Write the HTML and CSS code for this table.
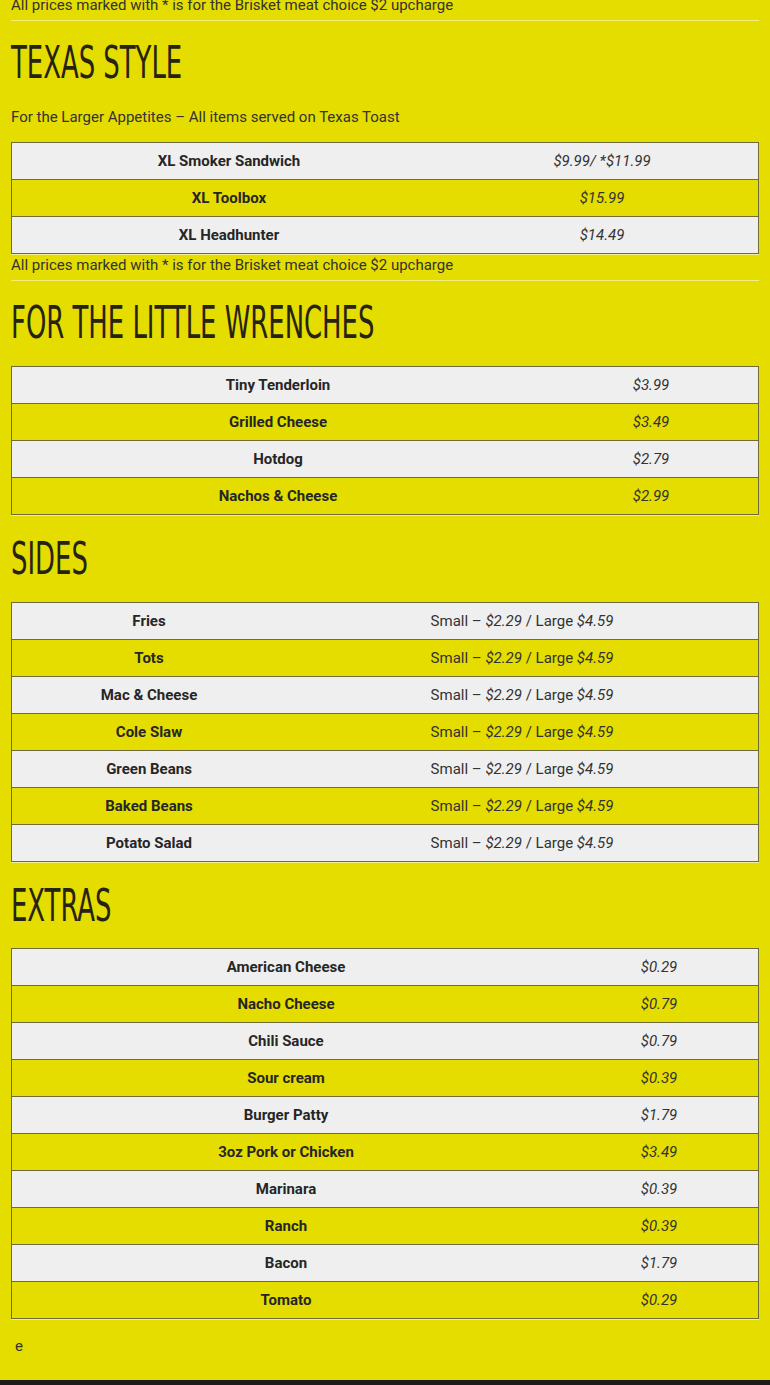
FILE: index.html
```html
<!DOCTYPE html>
<html lang="en">
<head>
<meta charset="utf-8">
<title>Menu</title>
<link rel="stylesheet" href="styles.css">
</head>
<body>
<main class="page">
  <p class="note">All prices marked with * is for the Brisket meat choice $2 upcharge</p>
  <hr class="rule">

  <section class="section">
    <h2 class="title"><span>TEXAS STYLE</span></h2>
    <p class="sub">For the Larger Appetites – All items served on Texas Toast</p>
    <table class="menu menu-texas">
      <tr><td>XL Smoker Sandwich</td><td><em>$9.99/ *$11.99</em></td></tr>
      <tr><td>XL Toolbox</td><td><em>$15.99</em></td></tr>
      <tr><td>XL Headhunter</td><td><em>$14.49</em></td></tr>
    </table>
    <p class="note">All prices marked with * is for the Brisket meat choice $2 upcharge</p>
    <hr class="rule">
  </section>

  <section class="section">
    <h2 class="title"><span>FOR THE LITTLE WRENCHES</span></h2>
    <table class="menu menu-kids">
      <tr><td>Tiny Tenderloin</td><td><em>$3.99</em></td></tr>
      <tr><td>Grilled Cheese</td><td><em>$3.49</em></td></tr>
      <tr><td>Hotdog</td><td><em>$2.79</em></td></tr>
      <tr><td>Nachos &amp; Cheese</td><td><em>$2.99</em></td></tr>
    </table>
  </section>

  <section class="section">
    <h2 class="title"><span>SIDES</span></h2>
    <table class="menu menu-sides">
      <tr><td>Fries</td><td>Small – <em>$2.29</em> / Large <em>$4.59</em></td></tr>
      <tr><td>Tots</td><td>Small – <em>$2.29</em> / Large <em>$4.59</em></td></tr>
      <tr><td>Mac &amp; Cheese</td><td>Small – <em>$2.29</em> / Large <em>$4.59</em></td></tr>
      <tr><td>Cole Slaw</td><td>Small – <em>$2.29</em> / Large <em>$4.59</em></td></tr>
      <tr><td>Green Beans</td><td>Small – <em>$2.29</em> / Large <em>$4.59</em></td></tr>
      <tr><td>Baked Beans</td><td>Small – <em>$2.29</em> / Large <em>$4.59</em></td></tr>
      <tr><td>Potato Salad</td><td>Small – <em>$2.29</em> / Large <em>$4.59</em></td></tr>
    </table>
  </section>

  <section class="section">
    <h2 class="title title-tight"><span>EXTRAS</span></h2>
    <table class="menu menu-extras">
      <tr><td>American Cheese</td><td><em>$0.29</em></td></tr>
      <tr><td>Nacho Cheese</td><td><em>$0.79</em></td></tr>
      <tr><td>Chili Sauce</td><td><em>$0.79</em></td></tr>
      <tr><td>Sour cream</td><td><em>$0.39</em></td></tr>
      <tr><td>Burger Patty</td><td><em>$1.79</em></td></tr>
      <tr><td>3oz Pork or Chicken</td><td><em>$3.49</em></td></tr>
      <tr><td>Marinara</td><td><em>$0.39</em></td></tr>
      <tr><td>Ranch</td><td><em>$0.39</em></td></tr>
      <tr><td>Bacon</td><td><em>$1.79</em></td></tr>
      <tr><td>Tomato</td><td><em>$0.29</em></td></tr>
    </table>
  </section>

  <p class="tail">e</p>
</main>
<footer class="footer"></footer>
</body>
</html>
```

FILE: styles.css
```css
html, body {
  margin: 0;
  padding: 0;
}
body {
  background: #e5dc00;
  font-family: Roboto, "Liberation Sans", sans-serif;
  font-size: 15px;
  color: #333;
}
.page {
  padding: 0 11px;
  margin-top: -6px;
}
.note, .sub {
  margin: 0;
  line-height: 22px;
}
.rule {
  border: 0;
  height: 1px;
  background: #f3ee7a;
  margin: 4px 0 -2px 0;
}
.section {
  display: block;
}
.title {
  margin: 0;
  height: 87px;
  display: flex;
  align-items: center;
  font-family: "Liberation Sans Narrow", "DejaVu Sans Condensed", sans-serif;
  font-weight: 400;
  font-size: 45px;
  color: #262314;
  line-height: 1;
  white-space: nowrap;
}
.title-tight {
  height: 86px;
}
.title span {
  display: inline-block;
  transform: scaleX(0.64);
  transform-origin: left center;
}
.sub {
  margin-bottom: 14px;
}
.menu {
  width: 100%;
  border-collapse: collapse;
  border: 1px solid #6e6c3c;
  box-shadow: 0 1px 0 rgba(255, 255, 255, 0.55);
}
.menu td {
  border-top: 1px solid #6e6c3c;
  padding: 8px 10px;
  line-height: 20px;
  text-align: center;
}
.menu tr:nth-child(odd) {
  background: #efefef;
}
.menu td:first-child {
  font-weight: 700;
  color: #262626;
}
.menu em {
  font-style: italic;
}
.menu-texas td:first-child { width: 414px; }
.menu-kids td:first-child { width: 512px; }
.menu-sides td:first-child { width: 254px; }
.menu-extras td:first-child { width: 528px; }
.tail {
  margin: 16px 0 0 0;
  padding: 0 0 23px 4px;
  line-height: 22px;
}
.footer {
  background: #1c1c1c;
  height: 100px;
}
```
